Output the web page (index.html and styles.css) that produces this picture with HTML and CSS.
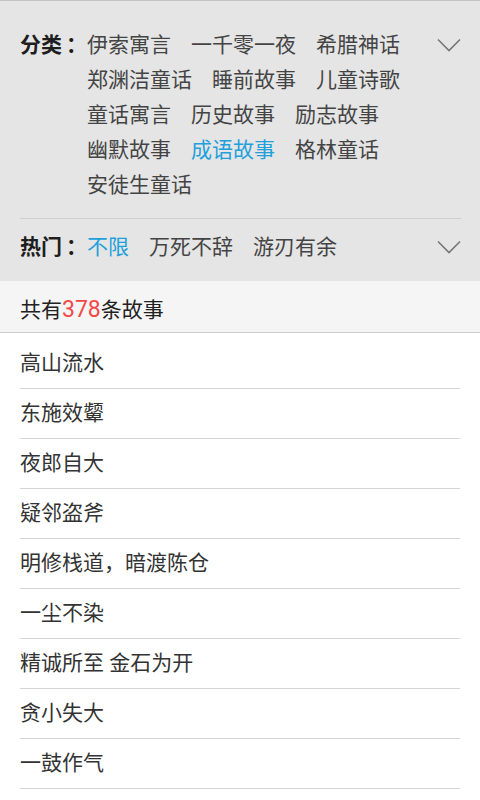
FILE: index.html
```html
<!DOCTYPE html>
<html lang="zh-CN">
	<head>
		<meta charset="UTF-8" />
		<meta name="viewport" content="width=device-width, initial-scale=1.0" />
		<title>成语故事</title>
		<link rel="stylesheet" href="styles.css">
	</head>
	<body>
		<section class="filter">
			<div class="filter-row">
				<span class="filter-label">分类<span class="colon">：</span></span>
				<ul class="filter-options">
					<li>伊索寓言</li>
					<li>一千零一夜</li>
					<li>希腊神话</li>
					<li>郑渊洁童话</li>
					<li>睡前故事</li>
					<li>儿童诗歌</li>
					<li>童话寓言</li>
					<li>历史故事</li>
					<li>励志故事</li>
					<li>幽默故事</li>
					<li class="active">成语故事</li>
					<li>格林童话</li>
					<li>安徒生童话</li>
				</ul>
				<svg class="chevron" viewBox="0 0 24 14">
					<path d="M1 1.5 L12 12.5 L23 1.5" />
				</svg>
			</div>
			<hr class="filter-divider" />
			<div class="filter-row">
				<span class="filter-label">热门<span class="colon">：</span></span>
				<ul class="filter-options">
					<li class="active">不限</li>
					<li>万死不辞</li>
					<li>游刃有余</li>
				</ul>
				<svg class="chevron" viewBox="0 0 24 14">
					<path d="M1 1.5 L12 12.5 L23 1.5" />
				</svg>
			</div>
		</section>
		<div class="count-bar">共有<span class="count">378</span>条故事</div>
		<ul class="story-list">
			<li>高山流水</li>
			<li>东施效颦</li>
			<li>夜郎自大</li>
			<li>疑邻盗斧</li>
			<li>明修栈道，暗渡陈仓</li>
			<li>一尘不染</li>
			<li>精诚所至 金石为开</li>
			<li>贪小失大</li>
			<li>一鼓作气</li>
		</ul>
	</body>
</html>
```

FILE: styles.css
```css
body,
html {
	font-family: Roboto, "Noto Sans CJK SC", sans-serif;
	margin: 0;
	background-color: #fff;
	color: #333;
}
ul {
	list-style: none;
	margin: 0;
	padding: 0;
}
.filter {
	background-color: #e5e5e5;
	border-top: 1px solid #c4c4c4;
	padding: 27px 19px 16px 20px;
}
.filter-row {
	display: flex;
	align-items: flex-start;
	font-size: 21px;
	line-height: 35px;
}
.filter-label {
	height: 35px;
	color: #1e1e1e;
	font-weight: 700;
	white-space: nowrap;
}
/* the JP face centres the full-width colon in its cell */
.filter-label .colon {
	font-family: "Noto Sans CJK JP", sans-serif;
	line-height: 1;
	padding-left: 4px;
}
.filter-options {
	flex: 1;
	display: flex;
	flex-wrap: wrap;
	column-gap: 20px;
	color: #444;
}
.filter-options li {
	white-space: nowrap;
}
.filter-options .active {
	color: #22a0dc;
}
.chevron {
	width: 24px;
	height: 14px;
	margin-top: 10px;
	flex-shrink: 0;
}
.chevron path {
	fill: none;
	stroke: #777;
	stroke-width: 1.6;
}
.filter-divider {
	border: none;
	border-top: 1px solid #cfcfcf;
	margin: 15px 0 11px;
}
.count-bar {
	height: 30px;
	background-color: #f5f5f5;
	border-bottom: 1px solid #cdcdcd;
	padding: 14px 20px 7px;
	font-size: 21px;
	line-height: 30px;
	color: #222;
}
.count {
	color: #f44848;
	font-size: 23px;
	line-height: 1;
}
.story-list {
	padding: 6px 20px 0;
}
.story-list li {
	height: 49px;
	line-height: 49px;
	border-bottom: 1px solid #d4d4d4;
	font-size: 21px;
	color: #333;
}
```
